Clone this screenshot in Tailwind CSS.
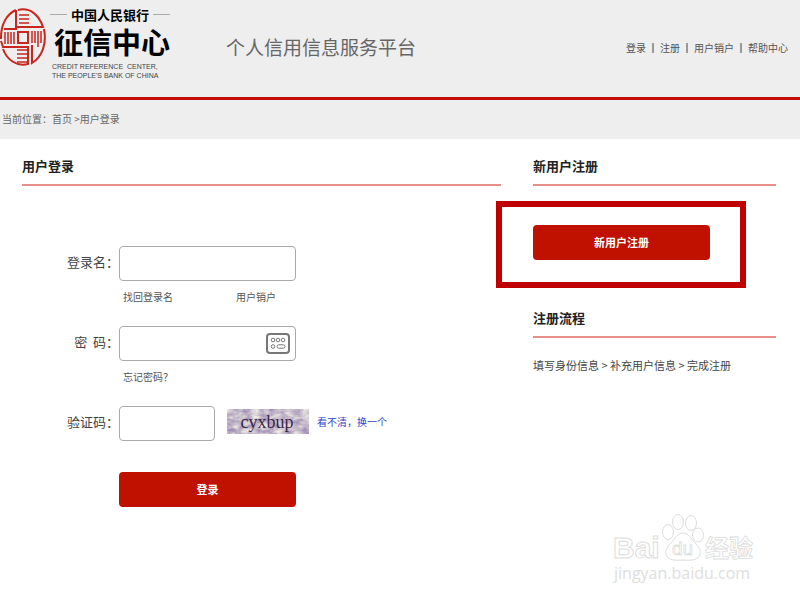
<!DOCTYPE html>
<html lang="zh-CN">
<head>
    <meta charset="UTF-8" />
    <meta name="viewport" content="width=device-width, initial-scale=1.0" />
    <title>个人信用信息服务平台</title>
    <script src="https://cdn.jsdelivr.net/npm/@tailwindcss/browser@4"></script>
</head>
<body class="bg-white font-['Noto_Sans_CJK_SC',sans-serif] text-[10px] leading-4 text-[#555]">

    <header class="flex items-start bg-[#eee] border-b-3 border-[#c40d06] pb-[17px] pr-3">
        <a href="#" class="flex w-[226px] shrink-0 pt-2 text-black">
            <!-- Seal -->
            <svg class="w-[46px] h-[58px] shrink-0" viewBox="0 0 46 58" fill="none" stroke="#c8261f" stroke-width="2">
                <path d="M16 2C7 6 1 16 1 29v2M16 2v19H4" />
                <path d="M18 2c12-3 21 5 25 17H17" />
                <path d="M44 21c3 15-2 28-12 34V37" />
                <path d="M1 33l2 6h25v17C17 59 7 52 3 41" />
                <path d="M19 7h10M19 11h10M19 15h10M17 50h11M17 46h11M17 42h11M17 54h11" stroke-width="1.5" />
                <path d="M5 24v12M8 24v12M11 24v12M14 24v12M32 23v12M35 23v12M38 23v16M41 23v12" stroke-width="1.5" />
                <path d="M18 24h10v11H18z" />
            </svg>
            <div class="ml-1 w-[120px]">
                <div class="flex items-center gap-1 text-[13px] leading-[13px] font-bold">
                    <span class="h-px flex-1 bg-[#aaa]"></span>
                    <span>中国人民银行</span>
                    <span class="h-px flex-1 bg-[#aaa]"></span>
                </div>
                <div class="pl-1 text-[29px] leading-[41px] font-bold">征信中心</div>
                <div class="pl-[2px] font-['Liberation_Sans',sans-serif] text-[7px] leading-[9px] whitespace-nowrap text-[#444]">
                    CREDIT REFERENCE &nbsp;CENTER,<br />THE PEOPLE'S BANK OF CHINA
                </div>
            </div>
        </a>
        <h1 class="pt-8 text-[19px] leading-[30px] text-[#666]">个人信用信息服务平台</h1>
        <nav class="ml-auto flex items-center gap-[6px] pt-10 text-[#555]">
            <a href="#">登录</a>
            <span class="h-[10px] w-[2px] bg-[#999]"></span>
            <a href="#">注册</a>
            <span class="h-[10px] w-[2px] bg-[#999]"></span>
            <a href="#">用户销户</a>
            <span class="h-[10px] w-[2px] bg-[#999]"></span>
            <a href="#">帮助中心</a>
        </nav>
    </header>

    <div class="bg-[#eee] pt-[11px] pb-3 pl-[2px] text-[#666]">
        当前位置：<a href="#">首页</a> &gt;<a href="#">用户登录</a>
    </div>

    <main class="grid grid-cols-[479fr_243fr] gap-8 pl-[22px] pr-6">
        <section>
            <h2 class="border-b-2 border-[#e98f8a] pt-4 pb-[7px] text-[13px] leading-[22px] font-bold text-[#222]">用户登录</h2>

            <form class="mt-[60px]">
                <div class="flex items-center">
                    <label for="username" class="w-[97px] pb-1 text-right text-[13px] text-[#444]">登录名：</label>
                    <input type="text" id="username" class="h-[35px] w-[177px] rounded-[4px] border border-[#aaa] bg-white px-2" />
                </div>
                <div class="mt-2 ml-[97px] flex w-[177px] justify-between pl-1 pr-5">
                    <a href="#">找回登录名</a>
                    <a href="#">用户销户</a>
                </div>

                <div class="mt-[21px] flex items-center">
                    <label for="password" class="w-[97px] pb-1 text-right text-[13px] text-[#444]">密&nbsp;&nbsp;码：</label>
                    <div class="relative">
                        <input type="password" id="password" class="block h-[35px] w-[177px] rounded-[4px] border border-[#aaa] bg-white pl-2 pr-9" />
                        <button type="button" aria-label="软键盘" class="absolute top-[7px] right-[6px]">
                            <svg width="24" height="21" viewBox="0 0 24 21" fill="none" stroke="#777">
                                <rect x="1" y="1" width="22" height="19" rx="3" stroke-width="2" />
                                <circle cx="7" cy="7" r="1.8" />
                                <circle cx="12" cy="7" r="1.8" />
                                <circle cx="17" cy="7" r="1.8" />
                                <circle cx="7" cy="13.5" r="1.8" />
                                <rect x="11" y="11.8" width="8" height="3.4" rx="1.7" />
                            </svg>
                        </button>
                    </div>
                </div>
                <div class="mt-2 ml-[97px] pl-1">
                    <a href="#">忘记密码？</a>
                </div>

                <div class="mt-[21px] flex items-center">
                    <label for="captcha" class="w-[97px] pb-1 text-right text-[13px] text-[#444]">验证码：</label>
                    <input type="text" id="captcha" class="h-[35px] w-[96px] rounded-[4px] border border-[#aaa] bg-white px-2" />
                    <div class="mb-1 flex items-center">
                        <svg class="ml-3 mr-2 h-[25px] w-[82px]" viewBox="0 0 82 25">
                            <filter id="noise" x="0" y="0" width="100%" height="100%" color-interpolation-filters="sRGB">
                                <feTurbulence type="fractalNoise" baseFrequency="0.12 0.2" numOctaves="3" seed="4" />
                                <feColorMatrix values="0.5 0 0 0 0.53  0.6 0 0 0 0.44  0.3 0 0 0 0.65  0 0 0 0 1" />
                            </filter>
                            <rect width="82" height="25" filter="url(#noise)" />
                            <text x="40" y="19" text-anchor="middle" class="font-['Liberation_Serif',serif] text-[18px]" fill="#3d2548">cyxbup</text>
                        </svg>
                        <a href="#" class="text-[#2b46c8]">看不清，换一个</a>
                    </div>
                </div>

                <button type="submit" class="mt-[31px] ml-[97px] block h-[35px] w-[177px] rounded-[4px] bg-[#c01000] pb-[2px] text-[11px] font-bold text-white">登录</button>
            </form>
        </section>

        <aside>
            <h2 class="border-b-2 border-[#e98f8a] pt-4 pb-[7px] text-[13px] leading-[22px] font-bold text-[#222]">新用户注册</h2>
            <div class="relative mt-[39px] w-[177px]">
                <button type="button" class="block h-[35px] w-full rounded-[4px] bg-[#c01000] pb-[2px] text-[11px] font-bold text-white">新用户注册</button>
                <div class="pointer-events-none absolute -top-6 -right-9 -bottom-7 -left-[37px] border-6 border-[#c00000]"></div>
            </div>

            <h2 class="mt-[31px] border-b-2 border-[#e98f8a] pt-4 pb-[7px] text-[13px] leading-[22px] font-bold text-[#222]">注册流程</h2>
            <p class="mt-[19px] text-[11px] whitespace-nowrap text-[#444]">填写身份信息 &gt; 补充用户信息 &gt; 完成注册</p>
        </aside>
    </main>

    <!-- Watermark -->
    <div class="absolute top-[512px] right-[42px] w-[146px]">
        <svg class="block h-[52px] w-full overflow-visible" viewBox="0 0 146 52" fill="#fff" stroke="#ddd">
            <text x="1" y="46" class="font-['Liberation_Sans',sans-serif] text-[30px] font-bold">Bai</text>
            <ellipse cx="56" cy="20" rx="5.5" ry="7.5" />
            <ellipse cx="66" cy="10" rx="5.5" ry="7.5" />
            <ellipse cx="79" cy="11" rx="5.5" ry="7.5" />
            <ellipse cx="86" cy="23" rx="5.5" ry="7" />
            <path d="M71 21c6 0 8 6 12 10s6 7 5 11c-1 5-6 7-17 6-11 1-16-1-17-6-1-4 1-7 5-11s6-10 12-10z" />
            <text x="60" y="43" class="font-['Liberation_Sans',sans-serif] text-[19px]" stroke-width="0.8">du</text>
            <text x="93" y="45" class="font-['Noto_Sans_CJK_SC',sans-serif] text-[24px] font-bold" stroke-width="0.8">经验</text>
        </svg>
        <div class="pl-[2px] font-['Open_Sans',sans-serif] text-[16px] leading-[18px] text-[#dedede]">jingyan.baidu.com</div>
    </div>

</body>
</html>
